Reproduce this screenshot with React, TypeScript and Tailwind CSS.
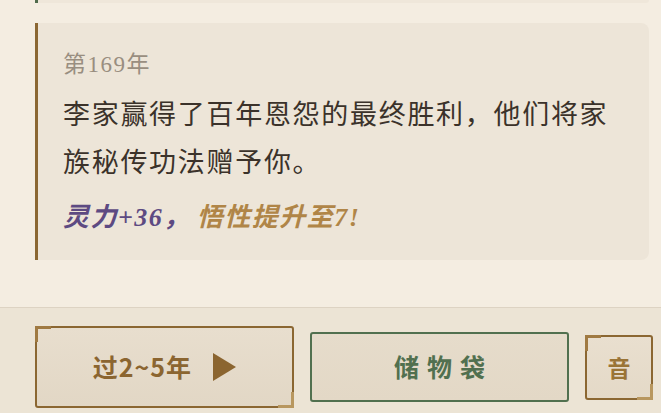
import React from "react";

const serif = {
  fontFamily: '"Liberation Serif", "Noto Sans CJK SC", serif',
};
const cjk = {
  fontFamily: '"Noto Sans CJK SC", "Noto Sans CJK JP", sans-serif',
};

function Corner() {
  return (
    <>
      <span className="pointer-events-none absolute -left-[2px] -top-[2px] h-[16px] w-[16px] border-l-[3px] border-t-[3px] border-[#a07a42]" />
      <span className="pointer-events-none absolute -bottom-[2px] -right-[2px] h-[16px] w-[16px] border-b-[3px] border-r-[3px] border-[#b8975f]" />
    </>
  );
}

export default function App() {
  return (
    <div className="flex h-[413px] w-[661px] flex-col overflow-hidden bg-[#f4ede1]">
      <div className="flex flex-1 flex-col pl-[35px] pr-[12px]">
        <div className="h-[3px] rounded-br-[8px] border-l-[3px] border-[#4f6b4c] bg-[#efe7da]" />
        <div className="mt-[20px] rounded-r-[8px] border-l-[3px] border-[#8b6732] bg-[#ede5d8] pb-[24px] pl-[25px] pr-[20px] pt-[26px]">
          <div className="text-[23px] leading-[32px] tracking-[1.5px] text-[#998e80]" style={serif}>
            第169年
          </div>
          <div className="mt-[10px] text-[27px] leading-[48px] tracking-[1.7px] text-[#3b322a]" style={serif}>
            李家赢得了百年恩怨的最终胜利，他们将家族秘传功法赠予你。
          </div>
          <div className="mt-[13px] text-[26px] font-bold italic leading-[36px] tracking-[1.5px]" style={serif}>
            <span className="mr-[6px] text-[#5d4a82]">灵力+36，</span>
            <span className="text-[#b08547]">悟性提升至7!</span>
          </div>
        </div>
      </div>
      <div className="h-[106px] border-t border-[#ddd3c3] bg-[#ece4d5] pl-[35px] pr-[8px] pt-[18px]">
        <div className="flex h-[82px] items-center gap-[16px]">
          <button
            className="relative flex h-[82px] w-[259px] items-center justify-center rounded-[3px] border-2 border-[#8b6732] bg-gradient-to-b from-[#e8dece] to-[#e2d7c5] text-[25px] font-bold text-[#8b6530]"
            style={cjk}
          >
            <Corner />
            <span className="tracking-[1px] pr-[2px]">过2~5年</span>
            <svg className="ml-[18px]" width="24" height="28" viewBox="0 0 24 28">
              <path d="M1 0 L24 14 L1 28 Z" fill="#8b6530" />
            </svg>
          </button>
          <button
            className="flex h-[70px] w-[259px] items-center justify-center rounded-[3px] border-2 border-[#51704f] bg-gradient-to-b from-[#e6dccb] to-[#e3d8c6] text-[25px] font-bold tracking-[8px] text-[#51704f]"
            style={cjk}
          >
            <span className="pl-[8px]">储物袋</span>
          </button>
          <button
            className="relative flex h-[65px] w-[68px] items-center justify-center rounded-[3px] border-2 border-[#8b6732] bg-gradient-to-b from-[#e9dfcf] to-[#e4d9c7] text-[23px] font-bold text-[#9a7436]"
            style={cjk}
          >
            <Corner />
            音
          </button>
        </div>
      </div>
    </div>
  );
}
